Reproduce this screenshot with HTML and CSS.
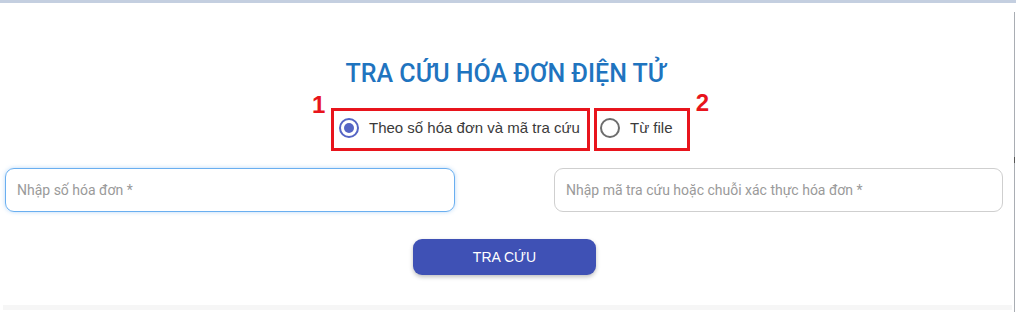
FILE: index.html
```html
<!DOCTYPE html>
<html lang="vi">
<head>
<meta charset="utf-8">
<title>Tra cứu hóa đơn điện tử</title>
<link rel="stylesheet" href="styles.css">
</head>
<body>
<div class="topbar"></div>
<div class="frame">
  <main class="page">
    <h1 class="title">TRA CỨU HÓA ĐƠN ĐIỆN TỬ</h1>
    <div class="options">
      <label class="option option-a">
        <span class="mark mark-1">1</span>
        <span class="radio checked"><span class="dot"></span></span>
        <span class="option-text">Theo số hóa đơn và mã tra cứu</span>
      </label>
      <label class="option option-b">
        <span class="mark mark-2">2</span>
        <span class="radio"></span>
        <span class="option-text">Từ file</span>
      </label>
    </div>
    <div class="fields">
      <div class="field focused"><span class="placeholder">Nhập số hóa đơn *</span></div>
      <div class="field"><span class="placeholder">Nhập mã tra cứu hoặc chuỗi xác thực hóa đơn *</span></div>
    </div>
    <div class="actions">
      <button class="btn">TRA CỨU</button>
    </div>
    <div class="footer-strip"></div>
  </main>
  <div class="rail"><span class="rail-tick"></span></div>
</div>
</body>
</html>
```

FILE: styles.css
```css
* { box-sizing: border-box; }
html, body { margin: 0; padding: 0; background: #fff; }
body { width: 1016px; height: 312px; overflow: hidden; font-family: "Liberation Sans", Arial, sans-serif; }

.topbar { height: 3px; background: #c4cfe0; }

.frame { display: flex; height: 309px; }
.page { flex: 1; display: flex; flex-direction: column; }
.rail { width: 2px; margin-top: 9px; border-left: 1px solid #a9adb3; position: relative; }
.rail-tick { position: absolute; left: -1px; top: 145px; width: 1px; height: 6px; background: #555; }

.title {
  margin: 56px 0 0;
  text-align: center;
  font-family: Roboto, "Liberation Sans", sans-serif;
  font-weight: 500;
  font-size: 25px;
  line-height: 29px;
  color: #1f74bf;
  padding-right: 3px;
}

.options {
  margin-top: 20px;
  display: flex;
  justify-content: center;
  gap: 4px;
  padding-left: 7px;
}
.option {
  position: relative;
  height: 43px;
  border: 3px solid #e8141c;
  display: flex;
  align-items: center;
  padding-left: 5px;
  padding-bottom: 4px;
  font-size: 15px;
  color: #3a3a3a;
}
.option-a { width: 259px; }
.option-b { width: 96px; padding-left: 3px; }
.option-text { margin-left: 10px; }
.option-b .option-text { margin-left: 10px; }

.radio {
  width: 20px; height: 20px;
  border-radius: 50%;
  border: 2px solid #6d6d6d;
  display: flex; align-items: center; justify-content: center;
  flex: none;
}
.radio.checked { border-color: #5565c4; }
.dot { width: 10px; height: 10px; border-radius: 50%; background: #5565c4; }

.mark {
  position: absolute;
  font-weight: bold;
  font-size: 24px;
  line-height: 24px;
  color: #e8141c;
}
.mark-1 { left: -22px; top: -18px; }
.mark-2 { right: -22px; top: -20px; }

.fields {
  margin-top: 17px;
  display: grid;
  grid-template-columns: 450px 449px;
  column-gap: 99px;
  padding-left: 5px;
}
.field {
  height: 44px;
  border: 1px solid #cfcfcf;
  border-radius: 9px;
  display: flex;
  align-items: center;
  padding-left: 11px;
  font-family: Roboto, "Liberation Sans", sans-serif;
  font-size: 14px;
  color: #9a9a9a;
}
.field.focused {
  border-color: #6aaff0;
  box-shadow: 0 0 4px rgba(100, 170, 240, 0.45);
}

.actions {
  margin-top: 27px;
  display: flex;
  justify-content: center;
}
.btn {
  width: 183px; height: 36px;
  margin-right: 5px;
  border: none;
  border-radius: 9px;
  background: #3f51b5;
  color: #fff;
  font-family: "Liberation Sans", Arial, sans-serif;
  font-size: 14px;
  box-shadow: 0 2px 4px rgba(0, 0, 0, 0.25);
}

.footer-strip {
  margin: 30px 0 0 3px;
  width: 1009px;
  height: 5px;
  background: #f6f6f6;
}
```
